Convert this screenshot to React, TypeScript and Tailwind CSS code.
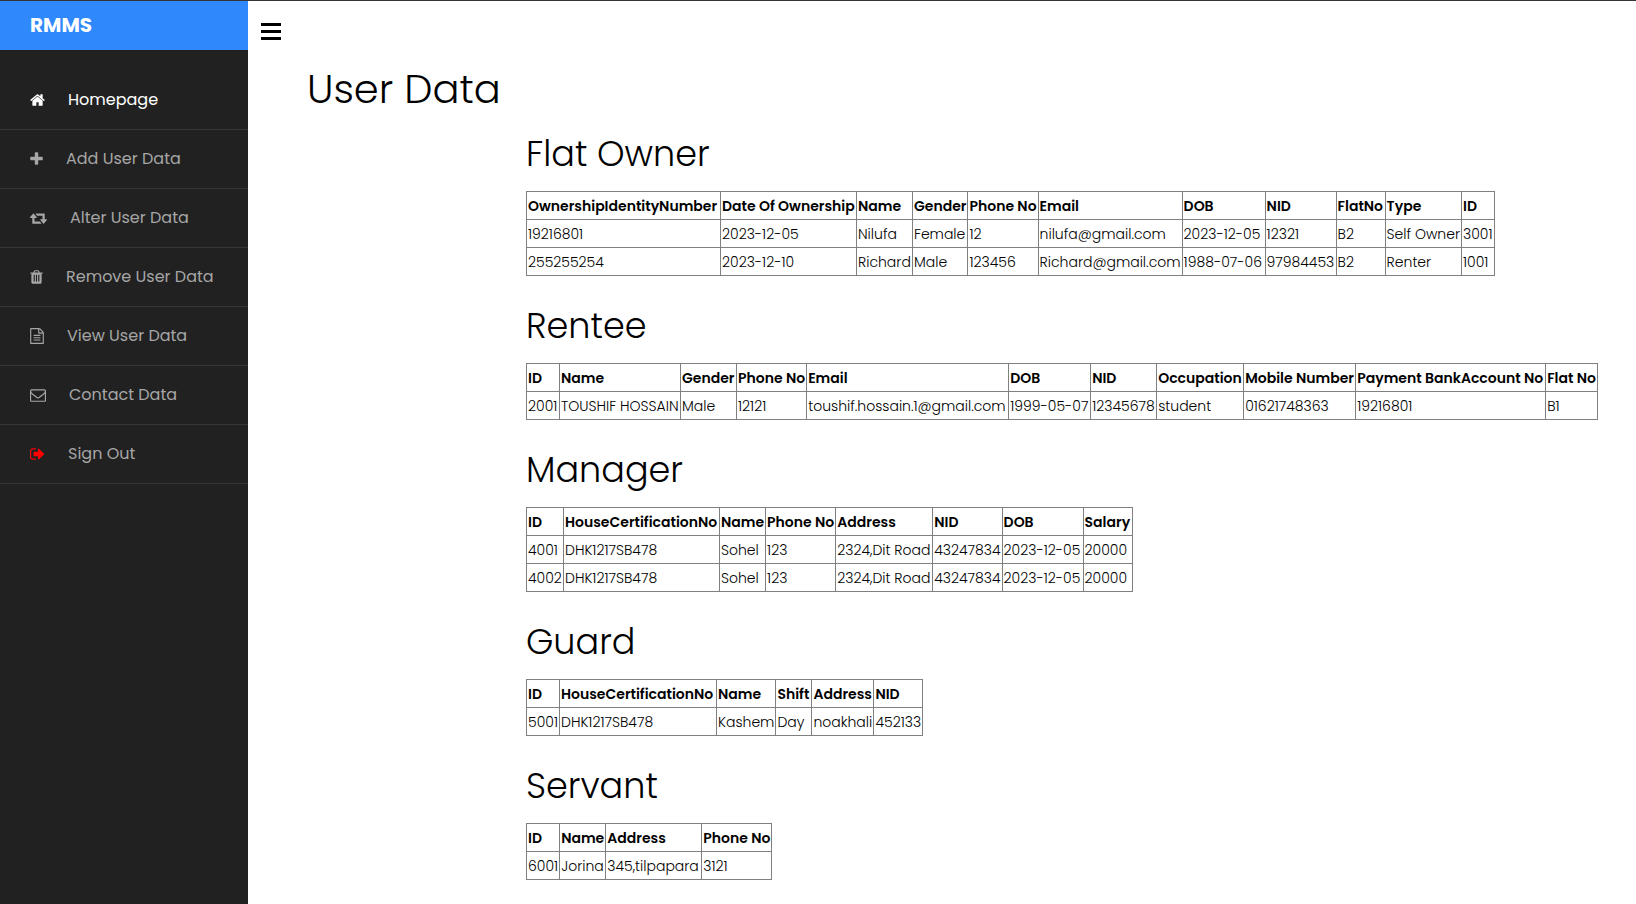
import React from "react";

type NavItem = {
  label: string;
  viewBox: string;
  size: string;
  path: string;
  active?: boolean;
  danger?: boolean;
};

type Column = { name: string; width: string };
type Section = { title: string; columns: Column[]; rows: string[][] };

const navItems: NavItem[] = [
  {
    label: "Homepage",
    viewBox: "64 0 1664 1792",
    size: "w-[15px]",
    active: true,
    path: "M1472 992v480q0 26-19 45t-45 19h-384v-384h-256v384h-384q-26 0-45-19t-19-45v-480q0-1 .5-3t.5-3l575-474 575 474q1 2 1 6zm223-69l-62 74q-8 9-21 11h-3q-13 0-21-7l-692-577-692 577q-12 8-24 7-13-2-21-11l-62-74q-8-10-7-23.5t11-21.5l719-599q32-26 76-26t76 26l244 204v-195q0-14 9-23t23-9h192q14 0 23 9t9 23v408l219 182q10 8 11 21.5t-7 23.5z",
  },
  {
    label: "Add User Data",
    viewBox: "192 0 1408 1792",
    size: "w-[13px]",
    path: "M1600 736v192q0 40-28 68t-68 28h-416v416q0 40-28 68t-68 28h-192q-40 0-68-28t-28-68v-416h-416q-40 0-68-28t-28-68v-192q0-40 28-68t68-28h416v-416q0-40 28-68t68-28h192q40 0 68 28t28 68v416h416q40 0 68 28t28 68z",
  },
  {
    label: "Alter User Data",
    viewBox: "-64 0 1920 1792",
    size: "w-[17px]",
    path: "M1216 1504q0 13-9.5 22.5t-22.5 9.5h-960q-8 0-13.5-2t-9-7-5.5-8-3-11.5-1-11.5v-600h-192q-26 0-45-19t-19-45q0-24 15-41l320-384q19-22 49-22t49 22l320 384q15 17 15 41 0 26-19 45t-45 19h-192v384h576q16 0 25 11l160 192q7 10 7 21zm640-416q0 24-15 41l-320 384q-20 23-49 23t-49-23l-320-384q-15-17-15-41 0-26 19-45t45-19h192v-384h-576q-16 0-25-12l-160-192q-7-9-7-20 0-13 9.5-22.5t22.5-9.5h960q8 0 13.5 2t9 7 5.5 8 3 11.5 1 11.5v600h192q26 0 45 19t19 45z",
  },
  {
    label: "Remove User Data",
    viewBox: "192 0 1408 1792",
    size: "w-[13px]",
    path: "M704 1376v-704q0-14-9-23t-23-9h-64q-14 0-23 9t-9 23v704q0 14 9 23t23 9h64q14 0 23-9t9-23zm256 0v-704q0-14-9-23t-23-9h-64q-14 0-23 9t-9 23v704q0 14 9 23t23 9h64q14 0 23-9t9-23zm256 0v-704q0-14-9-23t-23-9h-64q-14 0-23 9t-9 23v704q0 14 9 23t23 9h64q14 0 23-9t9-23zm-544-992h448l-48-117q-7-9-17-11h-317q-10 2-17 11zm928 32v64q0 14-9 23t-23 9h-96v948q0 83-47 143.5t-113 60.5h-832q-66 0-113-58.5t-47-141.5v-952h-96q-14 0-23-9t-9-23v-64q0-14 9-23t23-9h309l70-167q15-37 54-63t79-26h320q40 0 79 26t54 63l70 167h309q14 0 23 9t9 23z",
  },
  {
    label: "View User Data",
    viewBox: "128 0 1536 1792",
    size: "w-[14px]",
    path: "M1596 380q28 28 48 76t20 88v1152q0 40-28 68t-68 28h-1344q-40 0-68-28t-28-68v-1600q0-40 28-68t68-28h896q40 0 88 20t76 48zm-444-244v376h376q-10-29-22-41l-313-313q-12-12-41-22zm384 1528v-1024h-416q-40 0-68-28t-28-68v-416h-768v1536h1280zm-1024-864q0-14 9-23t23-9h704q14 0 23 9t9 23v64q0 14-9 23t-23 9h-704q-14 0-23-9t-9-23v-64zm736 224q14 0 23 9t9 23v64q0 14-9 23t-23 9h-704q-14 0-23-9t-9-23v-64q0-14 9-23t23-9h704zm0 256q14 0 23 9t9 23v64q0 14-9 23t-23 9h-704q-14 0-23-9t-9-23v-64q0-14 9-23t23-9h704z",
  },
  {
    label: "Contact Data",
    viewBox: "0 0 1792 1792",
    size: "w-[16px]",
    path: "M1664 1504v-768q-32 36-69 66-268 206-426 338-51 43-83 67t-86.5 48.5-102.5 24.5h-2q-48 0-102.5-24.5t-86.5-48.5-83-67q-158-132-426-338-37-30-69-66v768q0 13 9.5 22.5t22.5 9.5h1472q13 0 22.5-9.5t9.5-22.5zm0-1051v-24.5l-.5-13-3-12.5-5.5-9-9-7.5-14-2.5h-1472q-13 0-22.5 9.5t-9.5 22.5q0 168 147 284 193 152 401 317 6 5 35 29.5t46 37.5 44.5 31.5 50.5 27.5 43 9h2q20 0 43-9t50.5-27.5 44.5-31.5 46-37.5 35-29.5q208-165 401-317 54-43 100.5-115.5t46.5-131.5zm128-37v1088q0 66-47 113t-113 47h-1472q-66 0-113-47t-47-113v-1088q0-66 47-113t113-47h1472q66 0 113 47t47 113z",
  },
  {
    label: "Sign Out",
    viewBox: "64 0 1664 1792",
    size: "w-[15px]",
    danger: true,
    path: "M704 1440q0 4 1 20t.5 26.5-3 23.5-10 19.5-20.5 6.5h-320q-119 0-203.5-84.5t-84.5-203.5v-704q0-119 84.5-203.5t203.5-84.5h320q13 0 22.5 9.5t9.5 22.5q0 4 1 20t.5 26.5-3 23.5-10 19.5-20.5 6.5h-320q-66 0-113 47t-47 113v704q0 66 47 113t113 47h312l11.5 1 11.5 3 8 5.5 7 9 2 13.5zm928-544q0 26-19 45l-544 544q-19 19-45 19t-45-19-19-45v-288h-448q-26 0-45-19t-19-45v-384q0-26 19-45t45-19h448v-288q0-26 19-45t45-19 45 19l544 544q19 19 19 45z",
  },
];

const sections: Section[] = [
  {
    title: "Flat Owner",
    columns: [
      { name: "OwnershipIdentityNumber", width: "w-[194px]" },
      { name: "Date Of Ownership", width: "w-[136px]" },
      { name: "Name", width: "w-[56px]" },
      { name: "Gender", width: "w-[55px]" },
      { name: "Phone No", width: "w-[70px]" },
      { name: "Email", width: "w-[144px]" },
      { name: "DOB", width: "w-[83px]" },
      { name: "NID", width: "w-[71px]" },
      { name: "FlatNo", width: "w-[49px]" },
      { name: "Type", width: "w-[76px]" },
      { name: "ID", width: "w-[33px]" },
    ],
    rows: [
      ["19216801", "2023-12-05", "Nilufa", "Female", "12", "nilufa@gmail.com", "2023-12-05", "12321", "B2", "Self Owner", "3001"],
      ["255255254", "2023-12-10", "Richard", "Male", "123456", "Richard@gmail.com", "1988-07-06", "97984453", "B2", "Renter", "1001"],
    ],
  },
  {
    title: "Rentee",
    columns: [
      { name: "ID", width: "w-[33px]" },
      { name: "Name", width: "w-[121px]" },
      { name: "Gender", width: "w-[56px]" },
      { name: "Phone No", width: "w-[70px]" },
      { name: "Email", width: "w-[202px]" },
      { name: "DOB", width: "w-[82px]" },
      { name: "NID", width: "w-[66px]" },
      { name: "Occupation", width: "w-[87px]" },
      { name: "Mobile Number", width: "w-[112px]" },
      { name: "Payment BankAccount No", width: "w-[190px]" },
      { name: "Flat No", width: "w-[52px]" },
    ],
    rows: [
      ["2001", "TOUSHIF HOSSAIN", "Male", "12121", "toushif.hossain.1@gmail.com", "1999-05-07", "12345678", "student", "01621748363", "19216801", "B1"],
    ],
  },
  {
    title: "Manager",
    columns: [
      { name: "ID", width: "w-[37px]" },
      { name: "HouseCertificationNo", width: "w-[156px]" },
      { name: "Name", width: "w-[46px]" },
      { name: "Phone No", width: "w-[70px]" },
      { name: "Address", width: "w-[97px]" },
      { name: "NID", width: "w-[69px]" },
      { name: "DOB", width: "w-[81px]" },
      { name: "Salary", width: "w-[49px]" },
    ],
    rows: [
      ["4001", "DHK1217SB478", "Sohel", "123", "2324,Dit Road", "43247834", "2023-12-05", "20000"],
      ["4002", "DHK1217SB478", "Sohel", "123", "2324,Dit Road", "43247834", "2023-12-05", "20000"],
    ],
  },
  {
    title: "Guard",
    columns: [
      { name: "ID", width: "w-[33px]" },
      { name: "HouseCertificationNo", width: "w-[157px]" },
      { name: "Name", width: "w-[59px]" },
      { name: "Shift", width: "w-[36px]" },
      { name: "Address", width: "w-[62px]" },
      { name: "NID", width: "w-[49px]" },
    ],
    rows: [["5001", "DHK1217SB478", "Kashem", "Day", "noakhali", "452133"]],
  },
  {
    title: "Servant",
    columns: [
      { name: "ID", width: "w-[33px]" },
      { name: "Name", width: "w-[46px]" },
      { name: "Address", width: "w-[96px]" },
      { name: "Phone No", width: "w-[70px]" },
    ],
    rows: [["6001", "Jorina", "345,tilpapara", "3121"]],
  },
];

function Sidebar() {
  return (
    <aside className="w-[248px] shrink-0 bg-[#212121]">
      <a href="#home" className="flex h-[49px] items-center bg-[#2f89fc] px-[30px] pb-[2px] text-[20px] font-bold text-white">
        RMMS
      </a>
      <nav className="pt-[21px]">
        <ul>
          {navItems.map((item) => (
            <li key={item.label} className="border-b border-[#373737]">
              <a
                href="#section"
                className={`flex h-[58px] items-center gap-[23px] px-[30px] pb-px text-[16px] ${item.active ? "text-white" : "text-[#a6a6a6]"}`}
              >
                <svg
                  viewBox={item.viewBox}
                  aria-hidden="true"
                  className={`h-4 shrink-0 fill-current ${item.size} ${item.danger ? "text-[#ff0000]" : ""}`}
                >
                  <path d={item.path} />
                </svg>
                <span>{item.label}</span>
              </a>
            </li>
          ))}
        </ul>
      </nav>
    </aside>
  );
}

function DataSection({ title, columns, rows }: Section) {
  return (
    <section className="pt-[30px] first:pt-[18px]">
      <h2 className="pb-[17px] text-[35px] leading-[40px] font-light">{title}</h2>
      <table className="w-max border-collapse text-left text-[14px] leading-[20px] whitespace-nowrap">
        <thead>
          <tr className="h-[28px]">
            {columns.map((column) => (
              <th key={column.name} scope="col" className={`border border-[#808080] px-px py-0 font-semibold ${column.width}`}>
                {column.name}
              </th>
            ))}
          </tr>
        </thead>
        <tbody>
          {rows.map((row) => (
            <tr key={row[0]} className="h-[28px]">
              {row.map((value, index) => (
                <td key={columns[index].name} className="border border-[#808080] px-px py-0 font-light">
                  {value}
                </td>
              ))}
            </tr>
          ))}
        </tbody>
      </table>
    </section>
  );
}

export default function App() {
  return (
    <div className="flex min-h-screen border-t border-[#333333] bg-white font-[Poppins,Inter,sans-serif] text-black">
      <Sidebar />
      <main className="min-w-0 flex-1">
        <button type="button" aria-label="Toggle menu" className="ml-[12px] flex h-[61px] items-center px-px">
          <svg viewBox="0 0 20 17" aria-hidden="true" className="h-[17px] w-[20px] fill-current">
            <path d="M0 0h20v3H0zM0 7h20v3H0zM0 14h20v3H0z" />
          </svg>
        </button>
        <div className="pl-[59px]">
          <h1 className="text-[40px] leading-[54px] font-light">User Data</h1>
          <div className="pl-[219px]">
            {sections.map((section) => (
              <DataSection key={section.title} {...section} />
            ))}
          </div>
        </div>
      </main>
    </div>
  );
}
